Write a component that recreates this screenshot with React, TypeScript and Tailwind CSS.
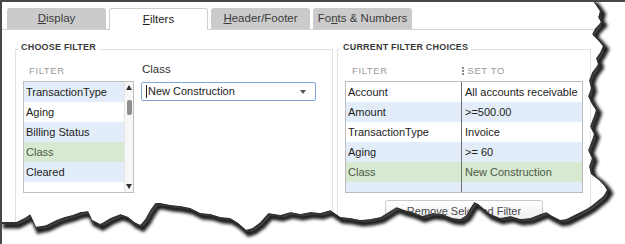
import type { ReactNode } from "react";

type Pt = [number, number];

// torn paper edge, right side then bottom (right to left)
const RIGHT_EDGE: Pt[] = [
  [592, 0], [596, 5], [600, 11], [598, 17], [601, 22], [595, 28], [592, 34], [598, 40],
  [603, 46], [600, 52], [596, 58], [598, 64], [592, 72], [589, 80], [591, 88], [588, 96],
  [592, 104], [596, 110], [593, 118], [590, 126], [594, 134], [591, 142], [588, 150],
  [592, 158], [589, 166], [591, 174], [599, 180], [604, 185], [607, 190], [603, 196],
  [598, 200], [592, 205], [586, 209], [580, 212], [574, 215], [566, 219], [560, 220],
];

const BOTTOM_EDGE: Pt[] = [
  [552, 216], [546, 212], [540, 214], [530, 218], [520, 219], [510, 216], [500, 218],
  [490, 214], [484, 209], [478, 204], [474, 202], [470, 208], [466, 215], [460, 219],
  [452, 218], [442, 214], [432, 213], [422, 216], [412, 212], [404, 210], [396, 207],
  [388, 212], [380, 217], [370, 219], [360, 220], [350, 218], [340, 217], [330, 210],
  [320, 213], [310, 212], [300, 214], [290, 212], [280, 215], [268, 213], [260, 222],
  [252, 228], [246, 230], [238, 223], [230, 218], [220, 217], [210, 214], [200, 213],
  [190, 208], [180, 206], [170, 205], [160, 203], [155, 203], [150, 210], [145, 219],
  [140, 225], [134, 222], [128, 217], [120, 214], [110, 218], [100, 224], [92, 220],
  [88, 211], [80, 212], [72, 215], [64, 217], [56, 220], [46, 225], [36, 227], [30, 214],
  [24, 218], [16, 222], [8, 222], [0, 222],
];

const EDGE = [...RIGHT_EDGE, ...BOTTOM_EDGE];
const edgeD = "M" + EDGE.map(([x, y]) => `${x},${y}`).join(" L");
const paperD = "M-10,-10 L592,-10 L" + EDGE.map(([x, y]) => `${x},${y}`).join(" L") + " L-10,222 Z";
const outsideD = "M-20,-20 H660 V280 H-20 Z " + paperD;

const LIST_ROWS = [
  { label: "TransactionType", tone: "blue" },
  { label: "Aging", tone: "white" },
  { label: "Billing Status", tone: "blue" },
  { label: "Class", tone: "green" },
  { label: "Cleared", tone: "blue" },
];

const CHOICES = [
  { filter: "Account", value: "All accounts receivable", tone: "white" },
  { filter: "Amount", value: ">=500.00", tone: "blue" },
  { filter: "TransactionType", value: "Invoice", tone: "white" },
  { filter: "Aging", value: ">= 60", tone: "blue" },
  { filter: "Class", value: "New Construction", tone: "green" },
];

function rowBg(tone: string) {
  if (tone === "blue") return "bg-[#e3edf9]";
  if (tone === "green") return "bg-[#d7e9d0] text-[#4b5a47]";
  return "bg-white";
}

function Tab({ active, children }: { active?: boolean; children: ReactNode }) {
  return (
    <div
      className={`flex h-[21px] w-[99px] items-center justify-center rounded-t-[3px] text-[11.5px] ${
        active
          ? "-mb-px h-[22px] border border-b-0 border-[#cfcfcf] bg-white text-[#222]"
          : "bg-[#cbcbcb] text-[#3c3c3c]"
      }`}
    >
      {children}
    </div>
  );
}

function Group({ title, className, children }: { title: string; className: string; children: ReactNode }) {
  return (
    <fieldset className={`border border-[#e2e2e2] ${className}`}>
      <legend className="ml-[2px] px-[3px] pb-[4px] text-[9px] font-bold leading-[12px] tracking-[0.2px] text-[#3a3a3a]">
        {title}
      </legend>
      {children}
    </fieldset>
  );
}

function TornEdge() {
  return (
    <svg className="pointer-events-none absolute -left-[2px] -top-[2px]" width={625} height={244} viewBox="0 0 625 244">
      <defs>
        <clipPath id="outside">
          <path d={outsideD} clipRule="evenodd" />
        </clipPath>
        <filter id="blur" x="-10%" y="-10%" width="120%" height="120%">
          <feGaussianBlur stdDeviation="1.6" />
        </filter>
      </defs>
      <path d={outsideD} fill="#ffffff" fillRule="evenodd" />
      <g clipPath="url(#outside)">
        <path d={edgeD} transform="translate(3,3.5)" fill="none" stroke="#1e1e1e" strokeWidth={6} filter="url(#blur)" />
        <path d={edgeD} transform="translate(1,1)" fill="none" stroke="#333" strokeWidth={2} />
      </g>
    </svg>
  );
}

export default function App() {
  return (
    <div className="relative h-[244px] w-[625px] overflow-hidden border-l-2 border-t-2 border-[#474747] bg-white font-['Liberation_Sans',Arial,sans-serif] text-[#1c1c1c]">
      <div className="flex gap-[3px] border-b border-[#d2d2d2] pl-[5px] pt-[6px]">
        <Tab>
          <span className="underline">D</span>isplay
        </Tab>
        <Tab active>
          <span className="underline">F</span>ilters
        </Tab>
        <Tab>
          <span className="underline">H</span>eader/Footer
        </Tab>
        <Tab>
          Fo<span className="underline">n</span>ts &amp; Numbers
        </Tab>
      </div>

      <div className="ml-[13px] mt-[11px] flex gap-[4px]">
        <Group title="CHOOSE FILTER" className="h-[220px] w-[318px]">
          <div className="flex gap-[7px] pl-[7px]">
            <div className="flex flex-col pt-[8px]">
              <div className="mb-[4px] pl-[6px] text-[9.5px] leading-[12px] tracking-[0.6px] text-[#9a9a9a]">FILTER</div>
              <div className="flex h-[112px] w-[111px] border border-[#bfbfbf]">
                <div className="flex flex-1 flex-col">
                  {LIST_ROWS.map((r) => (
                    <div key={r.label} className={`flex h-[20px] items-center pl-[2px] text-[11px] ${rowBg(r.tone)}`}>
                      {r.label}
                    </div>
                  ))}
                </div>
                <div className="flex w-[9px] flex-col items-center justify-between border-l border-[#e4e4e4] bg-[#f7f7f7] py-[3px]">
                  <div className="flex flex-col items-center">
                    <div className="h-0 w-0 border-x-[3px] border-b-[5px] border-x-transparent border-b-[#333]" />
                    <div className="mt-[10px] h-[15px] w-[5px] rounded-[2px] bg-[#8e8e8e]" />
                  </div>
                  <div className="h-0 w-0 border-x-[3px] border-t-[5px] border-x-transparent border-t-[#333]" />
                </div>
              </div>
            </div>
            <div className="flex flex-col pt-[5px]">
              <div className="mb-[6px] pl-[1px] text-[11.5px] leading-[14px] text-[#333]">Class</div>
              <div className="flex h-[19px] w-[175px] items-center justify-between rounded-[2px] border border-[#7ba6d8] bg-white pl-[4px] pr-[9px]">
                <div className="flex items-center text-[11px]">
                  <span className="mr-[1px] h-[13px] w-px bg-[#222]" />
                  New Construction
                </div>
                <div className="h-0 w-0 border-x-[3.5px] border-t-[4px] border-x-transparent border-t-[#555]" />
              </div>
            </div>
          </div>
        </Group>

        <Group title="CURRENT FILTER CHOICES" className="h-[220px] w-[254px]">
          <div className="flex flex-col pl-[7px] pt-[8px]">
            <div className="mb-[4px] flex text-[9.5px] leading-[12px] tracking-[0.6px] text-[#9a9a9a]">
              <div className="w-[117px] pl-[7px]">FILTER</div>
              <div className="flex items-center">
                <span className="mr-[4px] flex flex-col gap-[1px]">
                  <span className="h-[2px] w-[1.5px] bg-[#888]" />
                  <span className="h-[2px] w-[1.5px] bg-[#888]" />
                  <span className="h-[2px] w-[1.5px] bg-[#888]" />
                </span>
                SET TO
              </div>
            </div>
            <div className="relative h-[112px] w-[238px] border border-[#bdbdbd]">
              {CHOICES.map((c) => (
                <div key={c.filter} className={`flex h-[20px] items-center text-[11px] ${rowBg(c.tone)}`}>
                  <div className="w-[115px] pl-[2px]">{c.filter}</div>
                  <div className="pl-[4px]">{c.value}</div>
                </div>
              ))}
              <div className="h-[10px] bg-[#e3edf9]" />
              <div className="absolute bottom-0 left-[115px] top-0 w-px bg-[#707070]" />
            </div>
            <div className="mt-[7px] flex justify-center pr-[7px]">
              <div className="flex h-[22px] w-[158px] items-center justify-center rounded-[3px] border border-[#c9c9c9] bg-gradient-to-b from-white to-[#ededed] text-[11px] text-[#4a4a4a]">
                Remove Selected Filter
              </div>
            </div>
          </div>
        </Group>
      </div>

      <TornEdge />
    </div>
  );
}
